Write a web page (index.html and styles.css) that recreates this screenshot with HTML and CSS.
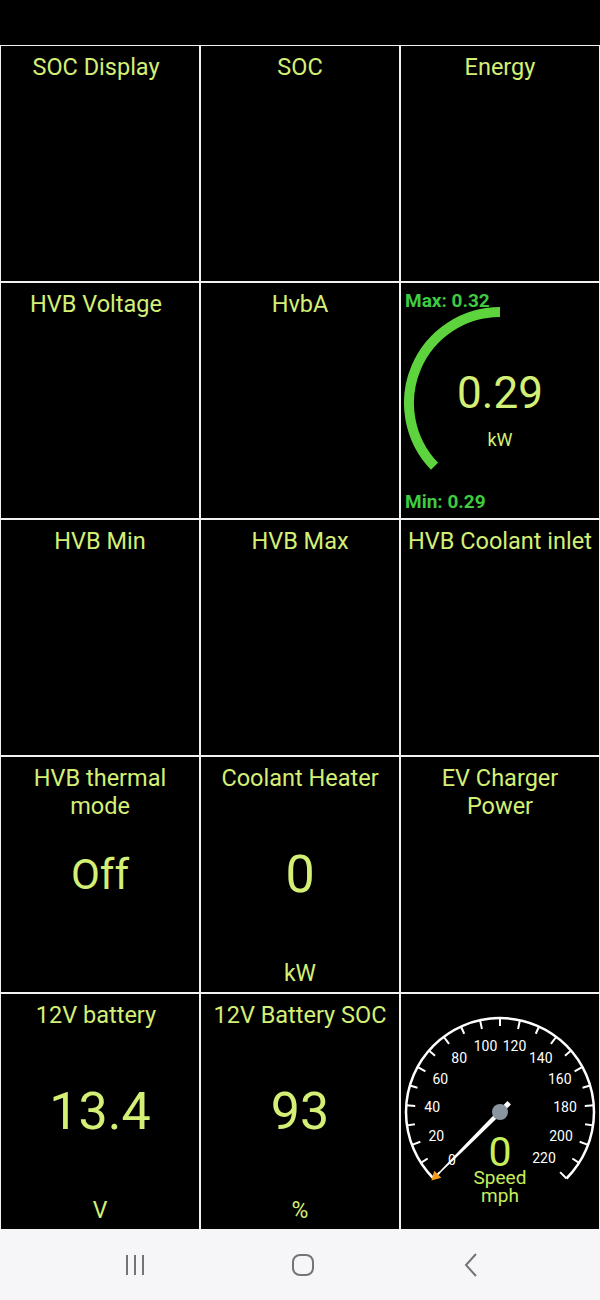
FILE: index.html
```html
<!DOCTYPE html>
<html lang="en">
<head>
    <meta charset="UTF-8">
    <meta name="viewport" content="width=device-width, initial-scale=1.0">
    <title>Dashboard</title>
    <link rel="stylesheet" href="styles.css">
</head>
<body>
    <div class="status-bar"></div>

    <!-- Gauge grid -->
    <div class="grid">
        <div class="cell"><div class="title shifted">SOC Display</div></div>
        <div class="cell"><div class="title">SOC</div></div>
        <div class="cell"><div class="title">Energy</div></div>

        <div class="cell"><div class="title shifted">HVB Voltage</div></div>
        <div class="cell"><div class="title">HvbA</div></div>
        <div class="cell">
            <svg class="gauge" viewBox="0 0 198 235" width="198" height="235">
                <path d="M 99 29 A 91 91 0 0 0 33.5 183.2" fill="none" stroke="#5dd43d" stroke-width="10"/>
                <text class="minmax" x="4" y="24">Max: 0.32</text>
                <text class="minmax" x="4" y="225">Min: 0.29</text>
                <text class="gauge-value" x="99" y="125">0.29</text>
                <text class="gauge-unit" x="99" y="163">kW</text>
            </svg>
        </div>

        <div class="cell"><div class="title">HVB Min</div></div>
        <div class="cell"><div class="title">HVB Max</div></div>
        <div class="cell"><div class="title">HVB Coolant inlet</div></div>

        <div class="cell">
            <div class="title">HVB thermal<br>mode</div>
            <div class="value small">Off</div>
        </div>
        <div class="cell">
            <div class="title">Coolant Heater</div>
            <div class="value">0</div>
            <div class="unit">kW</div>
        </div>
        <div class="cell"><div class="title">EV Charger<br>Power</div></div>

        <div class="cell">
            <div class="title shifted">12V battery</div>
            <div class="value">13.4</div>
            <div class="unit">V</div>
        </div>
        <div class="cell">
            <div class="title">12V Battery SOC</div>
            <div class="value">93</div>
            <div class="unit">%</div>
        </div>
        <div class="cell">
            <svg class="gauge" viewBox="0 0 198 235" width="198" height="235">
                <g transform="translate(99 118)" stroke="#fff" stroke-width="2">
                    <path d="M -66.5 66.5 A 94 94 0 1 1 66.5 66.5" fill="none" stroke-width="2.5"/>
                    <line x1="85" y1="0" x2="94" y2="0" transform="rotate(135)"/>
                    <line x1="86" y1="0" x2="94" y2="0" transform="rotate(147.27)"/>
                    <line x1="85" y1="0" x2="94" y2="0" transform="rotate(159.55)"/>
                    <line x1="86" y1="0" x2="94" y2="0" transform="rotate(171.82)"/>
                    <line x1="85" y1="0" x2="94" y2="0" transform="rotate(184.09)"/>
                    <line x1="86" y1="0" x2="94" y2="0" transform="rotate(196.36)"/>
                    <line x1="85" y1="0" x2="94" y2="0" transform="rotate(208.64)"/>
                    <line x1="86" y1="0" x2="94" y2="0" transform="rotate(220.91)"/>
                    <line x1="85" y1="0" x2="94" y2="0" transform="rotate(233.18)"/>
                    <line x1="86" y1="0" x2="94" y2="0" transform="rotate(245.45)"/>
                    <line x1="85" y1="0" x2="94" y2="0" transform="rotate(257.73)"/>
                    <line x1="86" y1="0" x2="94" y2="0" transform="rotate(270)"/>
                    <line x1="85" y1="0" x2="94" y2="0" transform="rotate(282.27)"/>
                    <line x1="86" y1="0" x2="94" y2="0" transform="rotate(294.55)"/>
                    <line x1="85" y1="0" x2="94" y2="0" transform="rotate(306.82)"/>
                    <line x1="86" y1="0" x2="94" y2="0" transform="rotate(319.09)"/>
                    <line x1="85" y1="0" x2="94" y2="0" transform="rotate(331.36)"/>
                    <line x1="86" y1="0" x2="94" y2="0" transform="rotate(343.64)"/>
                    <line x1="85" y1="0" x2="94" y2="0" transform="rotate(355.91)"/>
                    <line x1="86" y1="0" x2="94" y2="0" transform="rotate(368.18)"/>
                    <line x1="85" y1="0" x2="94" y2="0" transform="rotate(380.45)"/>
                    <line x1="86" y1="0" x2="94" y2="0" transform="rotate(392.73)"/>
                    <line x1="85" y1="0" x2="94" y2="0" transform="rotate(405)"/>
                </g>
                <g transform="translate(99 118)" class="ticks">
                    <text x="-48" y="48">0</text>
                    <text x="-63.7" y="23.8">20</text>
                    <text x="-67.8" y="-4.8">40</text>
                    <text x="-59.7" y="-32.6">60</text>
                    <text x="-40.8" y="-54.4">80</text>
                    <text x="-14.5" y="-66.4">100</text>
                    <text x="14.5" y="-66.4">120</text>
                    <text x="40.8" y="-54.4">140</text>
                    <text x="59.7" y="-32.6">160</text>
                    <text x="65" y="-4.8">180</text>
                    <text x="61" y="23.8">200</text>
                    <text x="44" y="46">220</text>
                </g>
                <text class="speed-value" x="99" y="172">0</text>
                <text class="speed-label" x="99" y="190">Speed</text>
                <text class="speed-label" x="99" y="208">mph</text>
                <!-- needle at 0 -->
                <g transform="translate(99 118) rotate(135)">
                    <polygon points="-13,-2.5 -13,2.5 50,1.6 92,0.5 92,-0.5 50,-1.6" fill="#fff"/>
                    <polygon points="88,-5 88,5 97,0" fill="#f29d1c"/>
                    <circle cx="0" cy="0" r="8" fill="#8a95a1"/>
                </g>
            </svg>
        </div>
    </div>

    <!-- Android navigation bar -->
    <div class="nav-bar">
        <div class="nav-btn">
            <svg width="20" height="22" viewBox="0 0 20 22">
                <path d="M2 1 V21 M10 1 V21 M18 1 V21" stroke="#747474" stroke-width="2" fill="none"/>
            </svg>
        </div>
        <div class="nav-btn">
            <svg width="22" height="22" viewBox="0 0 22 22">
                <rect x="1" y="1" width="20" height="20" rx="7" stroke="#747474" stroke-width="2" fill="none"/>
            </svg>
        </div>
        <div class="nav-btn">
            <svg width="14" height="24" viewBox="0 0 14 24">
                <polyline points="12,1 2,12 12,23" stroke="#747474" stroke-width="2" fill="none"/>
            </svg>
        </div>
    </div>
</body>
</html>
```
FILE: styles.css
```css
* {
    margin: 0;
    padding: 0;
    box-sizing: border-box;
}

body {
    font-family: Roboto, "Liberation Sans", sans-serif;
    background-color: #000;
    width: 600px;
    height: 1300px;
    overflow: hidden;
}

.status-bar {
    height: 45px;
    background-color: #000;
}

.grid {
    display: grid;
    grid-template-columns: repeat(3, 198px);
    grid-template-rows: repeat(5, 235px);
    gap: 2px;
    padding: 1px;
    background-color: #f2f2f2;
}

.cell {
    background-color: #000;
    color: #d4ef75;
    display: grid;
    justify-items: center;
    text-align: center;
    overflow: hidden;
}

.cell > * {
    grid-area: 1 / 1;
}

.title {
    align-self: start;
    font-size: 23.5px;
    line-height: 28px;
    padding-top: 7px;
    white-space: nowrap;
}

/* titles that carry a trailing space in the app */
.title.shifted {
    padding-right: 8px;
}

.value {
    align-self: center;
    font-size: 52px;
    line-height: 1;
}

.value.small {
    font-size: 42px;
}

.unit {
    align-self: end;
    font-size: 23px;
    line-height: 28px;
    padding-bottom: 4px;
}

.gauge {
    display: block;
    font-family: Roboto, "Liberation Sans", sans-serif;
}

.minmax {
    fill: #3fcb3f;
    font-size: 19px;
    font-weight: bold;
}

.gauge-value {
    fill: #d4ef75;
    font-size: 44px;
    text-anchor: middle;
}

.gauge-unit {
    fill: #d4ef75;
    font-size: 18px;
    text-anchor: middle;
}

.ticks text {
    fill: #fff;
    font-size: 14px;
    text-anchor: middle;
    dominant-baseline: central;
}

.speed-value {
    fill: #c6ee5a;
    font-size: 41px;
    text-anchor: middle;
}

.speed-label {
    fill: #c6ee5a;
    font-size: 19px;
    text-anchor: middle;
}

.nav-bar {
    height: 70px;
    background-color: #f6f6f8;
    display: flex;
    align-items: center;
    gap: 128px;
    padding-left: 115px;
}

.nav-btn {
    width: 40px;
    display: flex;
    justify-content: center;
}

.nav-btn svg {
    display: block;
}
```
